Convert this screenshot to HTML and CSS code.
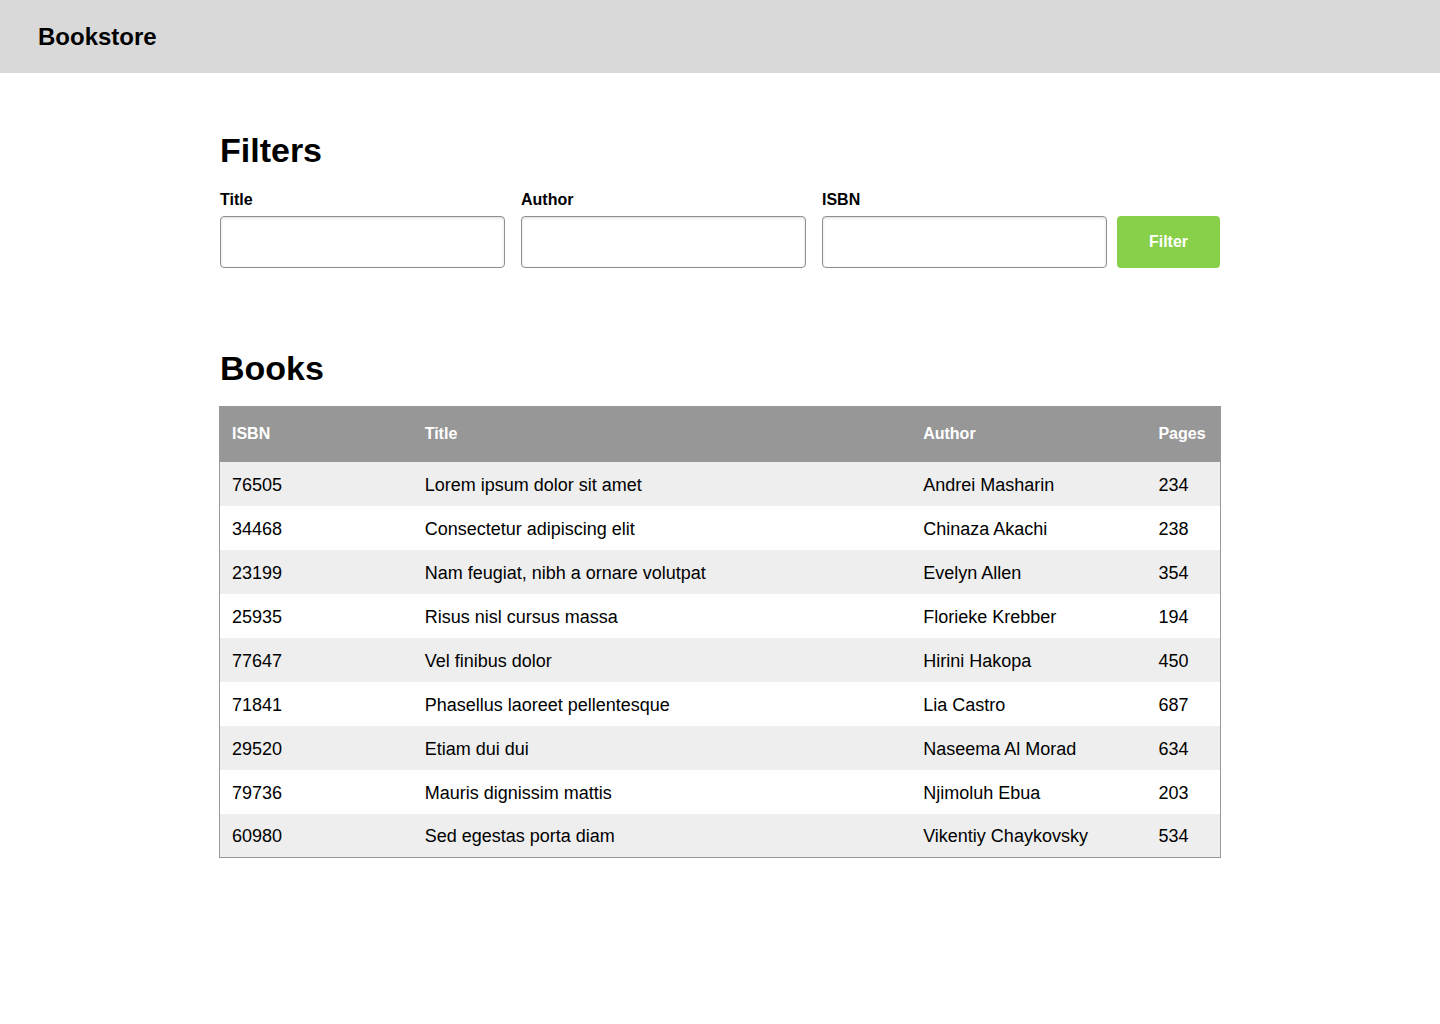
FILE: index.html
```html
<!DOCTYPE html>
<html>
<head>
<meta charset="utf-8">
<title>Bookstore</title>
<link rel="stylesheet" href="styles.css">
</head>
<body>
<header class="topbar"><span class="brand">Bookstore</span></header>
<main class="content">
  <section class="filters">
    <h2 class="section-title">Filters</h2>
    <form class="filter-row" onsubmit="return false">
      <div class="fields">
        <label class="field"><span class="field-label">Title</span><input class="field-input" type="text"></label>
        <label class="field"><span class="field-label">Author</span><input class="field-input" type="text"></label>
        <label class="field"><span class="field-label">ISBN</span><input class="field-input" type="text"></label>
      </div>
      <button class="filter-btn" type="submit">Filter</button>
    </form>
  </section>
  <section class="books">
    <h2 class="section-title">Books</h2>
    <table class="book-table">
      <colgroup><col class="c-isbn"><col class="c-title"><col class="c-author"><col class="c-pages"></colgroup>
      <thead><tr><th>ISBN</th><th>Title</th><th>Author</th><th>Pages</th></tr></thead>
      <tbody>
        <tr><td>76505</td><td>Lorem ipsum dolor sit amet</td><td>Andrei Masharin</td><td>234</td></tr>
        <tr><td>34468</td><td>Consectetur adipiscing elit</td><td>Chinaza Akachi</td><td>238</td></tr>
        <tr><td>23199</td><td>Nam feugiat, nibh a ornare volutpat</td><td>Evelyn Allen</td><td>354</td></tr>
        <tr><td>25935</td><td>Risus nisl cursus massa</td><td>Florieke Krebber</td><td>194</td></tr>
        <tr><td>77647</td><td>Vel finibus dolor</td><td>Hirini Hakopa</td><td>450</td></tr>
        <tr><td>71841</td><td>Phasellus laoreet pellentesque</td><td>Lia Castro</td><td>687</td></tr>
        <tr><td>29520</td><td>Etiam dui dui</td><td>Naseema Al Morad</td><td>634</td></tr>
        <tr><td>79736</td><td>Mauris dignissim mattis</td><td>Njimoluh Ebua</td><td>203</td></tr>
        <tr><td>60980</td><td>Sed egestas porta diam</td><td>Vikentiy Chaykovsky</td><td>534</td></tr>
      </tbody>
    </table>
  </section>
</main>
</body>
</html>
```
FILE: styles.css
```css
* { box-sizing: border-box; }
body {
  margin: 0;
  font-family: "Liberation Sans", Arial, Helvetica, sans-serif;
  color: #000;
  background: #fff;
}
.topbar {
  height: 73px;
  background: #d9d9d9;
  display: flex;
  align-items: center;
  padding: 0 38px;
}
.brand {
  font-size: 24px;
  font-weight: 700;
}
.content {
  width: 1000px;
  margin: 0 auto;
  padding-top: 55px;
}
.section-title {
  margin: 0;
  font-size: 34px;
  font-weight: 700;
  line-height: 44px;
}
.filter-row {
  display: flex;
  align-items: flex-end;
  margin-top: 16px;
}
.fields {
  display: flex;
  gap: 16px;
}
.field {
  display: flex;
  flex-direction: column;
  width: 285px;
}
.field-label {
  font-size: 16px;
  font-weight: 700;
  line-height: 20px;
  margin-bottom: 8px;
  position: relative;
  top: 2px;
}
.field-input {
  height: 52px;
  border: 1px solid #8f8f8f;
  border-radius: 4px;
  box-shadow: inset 0 1px 3px rgba(0,0,0,0.15);
  font: inherit;
  font-size: 16px;
  padding: 0 10px;
  background: #fff;
}
.filter-btn {
  margin-left: 10px;
  width: 104px;
  height: 52px;
  border: none;
  border-radius: 4px;
  background: #88cf4a;
  color: #fff;
  font-family: inherit;
  font-size: 16px;
  font-weight: 700;
}
.books {
  margin-top: 78px;
}
.books .section-title {
  margin-bottom: 16px;
}
.book-table {
  width: 1002px;
  margin-left: -1px;
  border-collapse: collapse;
  table-layout: fixed;
  border: 1px solid #999;
  font-size: 18px;
}
.c-isbn { width: 193px; }
.c-title { width: 498px; }
.c-author { width: 235px; }
.c-pages { width: 74px; }
.book-table th {
  background: #979797;
  color: #fff;
  font-size: 16px;
  font-weight: 700;
  text-align: left;
  height: 55px;
  padding: 0 12px;
}
.book-table td {
  height: 44px;
  padding: 3px 12px 0;
  white-space: nowrap;
}
.book-table tbody tr:nth-child(odd) { background: #eeeeee; }
.book-table tbody tr:nth-child(even) { background: #fff; }
```
